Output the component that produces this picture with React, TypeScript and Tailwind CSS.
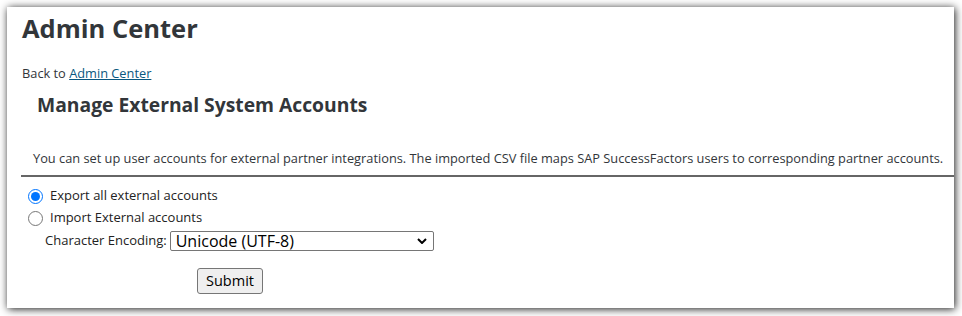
import React from "react";

export default function App() {
  const f = { fontFamily: '"Open Sans", "Noto Sans", sans-serif' };
  return (
    <div className="w-[962px] h-[316px] bg-white pt-[7px] pl-[7px]" style={f}>
      <div className="w-[947px] h-[301px] bg-white shadow-[1px_1px_8px_rgba(0,0,0,0.9)] flex flex-col text-[#32363a]">
        <h1 className="pl-[15px] pt-[4px] text-[25.5px] leading-[34px] font-bold text-[#32363a]">Admin Center</h1>
        <div className="pl-[15px] mt-[19px] text-[12.8px] leading-[18px] text-[#32363a]">
          Back to <a className="text-[#0a5780] underline" href="#">Admin Center</a>
        </div>
        <h2 className="pl-[30px] mt-[10px] text-[19.3px] leading-[26px] font-bold text-[#32363a]">Manage External System Accounts</h2>
        <p className="pl-[26px] mt-[31px] text-[12.8px] leading-[18px] text-[#32363a]">
          You can set up user accounts for external partner integrations. The imported CSV file maps SAP SuccessFactors users to corresponding partner accounts.
        </p>
        <div className="ml-[14px] mt-[8px] h-[2px] bg-[#666]" />
        <div className="pl-[21px] mt-[8px] flex flex-col text-[13px] text-[#222]">
          <label className="flex items-center gap-[7px] h-[22px]">
            <input type="radio" name="r" defaultChecked className="w-[15px] h-[15px] m-0" />
            <span>Export all external accounts</span>
          </label>
          <label className="flex items-center gap-[7px] h-[22px]">
            <input type="radio" name="r" className="w-[15px] h-[15px] m-0" />
            <span>Import External accounts</span>
          </label>
          <div className="flex items-center pl-[17px] mt-[1px] h-[22px]">
            <span className="mr-[3px]">Character Encoding:</span>
            <div className="w-[264px] h-[20px] border border-[#767676] rounded-[2px] bg-white flex items-center justify-between pl-[5px] pr-[6px] text-[16px] text-black">
              <span>Unicode (UTF-8)</span>
              <svg width="10" height="6" viewBox="0 0 10 6"><path d="M1 1l4 4 4-4" stroke="#000" strokeWidth="2" fill="none" /></svg>
            </div>
          </div>
          <div className="pl-[169px] mt-[16px]">
            <button className="w-[66px] h-[26px] bg-[#efefef] border border-[#767676] rounded-[3px] text-[14.5px] text-black">Submit</button>
          </div>
        </div>
      </div>
    </div>
  );
}
